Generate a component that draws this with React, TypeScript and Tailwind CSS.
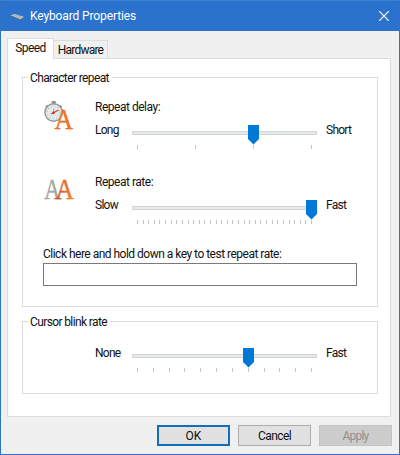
import clsx from "clsx";
import type { ReactNode } from "react";
import { useState } from "react";

interface SliderProps {
  steps: number;
  value: number;
  onChange: (value: number) => void;
}

const Slider = ({ steps, value, onChange }: SliderProps) => {
  const ticks = Array.from({ length: steps }, (_, idx) =>
    Math.round((idx * 174) / (steps - 1))
  );

  return (
    <svg
      className="block h-6 w-[185px] shrink-0"
      viewBox="0 0 185 24"
      shapeRendering="crispEdges"
      onClick={(e) => {
        const box = e.currentTarget.getBoundingClientRect();
        const step = Math.round(
          ((e.clientX - box.left - 5) / 174) * (steps - 1)
        );
        onChange(Math.min(steps - 1, Math.max(0, step)));
      }}
    >
      <rect x="0.5" y="6.5" width="184" height="3" fill="#e7eaea" stroke="#d2d5d4" />
      {ticks.map((x, idx) => (
        <rect key={idx} x={x + 5} y="20" width="1" height="4" fill="#c4c4c4" />
      ))}
      <path
        transform={`translate(${ticks[value]} 0)`}
        d="M0 0h11v14l-5.5 5.5L0 14z"
        fill="#0078d7"
        shapeRendering="auto"
      />
    </svg>
  );
};

interface SliderRowProps extends SliderProps {
  low: string;
  high: string;
}

const SliderRow = ({ low, high, ...slider }: SliderRowProps) => (
  <div className="flex h-6 tracking-[-0.75px]">
    <span className="-mt-[3px] w-[37px]">{low}</span>
    <Slider {...slider} />
    <span className="-mt-[3px] ml-[9px]">{high}</span>
  </div>
);

interface GroupProps {
  title: string;
  className: string;
  children: ReactNode;
}

const Group = ({ title, className, children }: GroupProps) => (
  <section className={clsx("w-[356px] border border-[#dcdcdc]", className)}>
    <h3 className="-mt-2 ml-[5px] h-4 w-fit bg-white pr-[3px] pl-[2px] tracking-[-0.62px]">
      {title}
    </h3>
    {children}
  </section>
);

const KeyboardIcon = () => (
  <svg className="block h-2 w-[15px]" viewBox="0 0 15 8">
    <path d="M0.5 2.2 5 1l9.2 3-4 2.6z" fill="#c9cdcf" />
    <path d="m0.5 2.2 9.7 4.4 4-2.6v.8l-4 2.4L.5 3z" fill="#59697b" />
    <path d="m3 2 7.5 3.4M5 1.7l7 2.7" stroke="#8d969d" strokeWidth="0.6" />
  </svg>
);

const DelayIcon = () => (
  <svg className="block h-8 w-8 overflow-visible" viewBox="0 0 32 32">
    <g transform="translate(0.7 1.5)">
      <path d="M8 3.2V.5h4v2.700zM1.500 6.200l2-2L5 5.700l-2 2zM16.500 4.200l2 2-1.600 1.500-1.700-2z" fill="#8b9194" />
      <circle cx="10" cy="12" r="8.8" fill="#e5e8e9" stroke="#90979a" strokeWidth="1.4" />
      <circle cx="10" cy="12" r="6.5" fill="none" stroke="#a5abae" strokeWidth="1.2" strokeDasharray="0.7 2.7" />
      <path d="m7.5 13.5 7.3-4" stroke="#e13b2b" strokeWidth="1.3" />
      <path d="m9.8 12.3.2-4.5" stroke="#9ea3a5" strokeWidth="0.8" />
      <circle cx="9.8" cy="12.3" r="1.2" fill="#b9342c" />
    </g>
    <text x="11.5" y="29.5" fontSize="29" textLength="18.5" lengthAdjust="spacingAndGlyphs" fill="#f2701f" stroke="#f2701f" strokeWidth="0.4" className="font-['Liberation_Serif',serif]">
      A
    </text>
  </svg>
);

const RateIcon = () => (
  <svg className="block h-8 w-8 overflow-visible" viewBox="0 0 32 32">
    <defs>
      <linearGradient id="rate" x1="0" x2="1">
        <stop offset="0" stopColor="#d94b1c" />
        <stop offset="1" stopColor="#f98a3d" />
      </linearGradient>
    </defs>
    <g fontSize="28.5" strokeWidth="0.4" className="font-['Liberation_Serif',serif]">
      <text x="1.3" y="25" textLength="16" lengthAdjust="spacingAndGlyphs" fill="#a3a7a5" stroke="#a3a7a5">
        A
      </text>
      <text x="12.5" y="25" textLength="18.5" lengthAdjust="spacingAndGlyphs" fill="url(#rate)" stroke="url(#rate)">
        A
      </text>
    </g>
  </svg>
);

const App = () => {
  const [delay, setDelay] = useState(2);
  const [rate, setRate] = useState(31);
  const [blink, setBlink] = useState(7);

  return (
    <div className="h-[455px] w-[400px] overflow-hidden border border-t-0 border-[#2d74c4] bg-[#f0f0f0] font-['Roboto',sans-serif] text-[12px] leading-4 whitespace-nowrap text-[#111111]">
      <header className="flex h-[31px] border-t border-[#3c82d3] bg-[#2a72cc] pt-[7px] pl-[9px] text-white">
        <div className="mt-[5px]">
          <KeyboardIcon />
        </div>
        <h1 className="ml-[5px] tracking-[-0.12px]">Keyboard Properties</h1>
        <button className="ml-auto h-4 w-5 pr-[10px]" aria-label="Close">
          <svg className="-mt-px block h-[10px] w-[10px]" viewBox="0 0 10 10">
            <path d="m0 0 10 10M10 0 0 10" stroke="white" strokeWidth="1.2" />
          </svg>
        </button>
      </header>

      <main className="pt-[7px] pl-[6px]">
        <nav className="flex h-5 items-end">
          <button className="z-10 -mb-px h-[21px] w-[47px] border border-b-0 border-[#dcdcdc] bg-white pb-[3px] tracking-[-0.6px]">
            Speed
          </button>
          <button className="h-[18px] w-[54px] border border-b-0 border-l-0 border-[#dcdcdc] tracking-[-0.8px]">
            Hardware
          </button>
        </nav>

        <div className="h-[359px] w-[384px] border border-[#dcdcdc] bg-white pt-[18px] pl-[14px]">
          <Group title="Character repeat" className="h-[230px]">
            <div className="mt-[13px] flex pl-5">
              <div className="w-[52px]">
                <DelayIcon />
              </div>
              <div>
                <p className="mb-[10px] tracking-[-0.48px]">Repeat delay:</p>
                <SliderRow low="Long" high="Short" steps={4} value={delay} onChange={setDelay} />
              </div>
            </div>
            <div className="mt-[25px] flex pl-5">
              <div className="w-[52px]">
                <RateIcon />
              </div>
              <div>
                <p className="mb-[10px] tracking-[-0.48px]">Repeat rate:</p>
                <SliderRow low="Slow" high="Fast" steps={32} value={rate} onChange={setRate} />
              </div>
            </div>
            <label className="mt-[22px] block pl-5 tracking-[-0.51px]">
              Click here and hold down a key to test repeat rate:
              <input className="mt-px block h-[23px] w-[314px] border border-[#7a7a7a] px-1 outline-none" />
            </label>
          </Group>

          <Group title="Cursor blink rate" className="mt-[14px] h-[73px]">
            <div className="mt-[18px] pl-[72px]">
              <SliderRow low="None" high="Fast" steps={12} value={blink} onChange={setBlink} />
            </div>
          </Group>
        </div>

        <footer className="mt-2 flex gap-2 pl-[150px]">
          <button className="h-[21px] w-[73px] border-2 border-[#0f6fbd] bg-[#e1e1e1]">OK</button>
          <button className="h-[21px] w-[73px] border border-[#adadad] bg-[#e1e1e1] tracking-[-0.6px]">
            Cancel
          </button>
          <button
            className="h-[21px] w-[73px] border border-[#c4c4c4] bg-[#cccccc] tracking-[-0.8px] text-[#909090]"
            disabled
          >
            Apply
          </button>
        </footer>
      </main>
    </div>
  );
};

export default App;
